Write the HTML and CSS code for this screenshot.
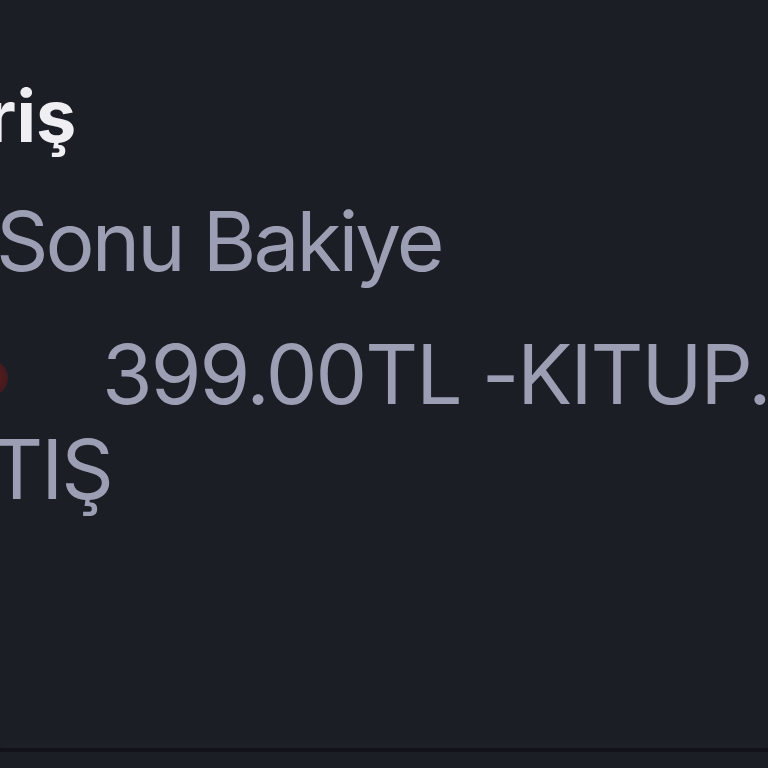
FILE: index.html
```html
<!DOCTYPE html>
<html lang="tr">
  <head>
    <meta charset="UTF-8" />
    <meta name="viewport" content="width=device-width, initial-scale=1.0" />
    <title>Giriş</title>
    <link rel="stylesheet" href="styles.css">
  </head>
  <body>
    <div class="page">
      <div class="content">
        <h1 class="title">Giriş</h1>
        <p class="label">Sonu Bakiye</p>
        <p class="entry">
          <span class="dot"></span><span class="amount">399.00TL -KITUP.NET SATIŞ</span>
        </p>
      </div>
      <div class="bottom-bar"></div>
    </div>
  </body>
</html>
```
FILE: styles.css
```css
body {
  margin: 0;
  background: #1c1e26;
  font-family: Inter, "Liberation Sans", sans-serif;
  overflow: hidden;
}
.page {
  height: 100vh;
  display: flex;
  flex-direction: column;
}
.content {
  flex: 1;
  padding-top: 72px;
}
.title {
  margin: 0 0 34px -87px;
  font-size: 72px;
  line-height: 88px;
  font-weight: 700;
  color: #eeeef3;
}
.label {
  margin: 0 0 38px -4px;
  font-size: 82px;
  line-height: 95px;
  letter-spacing: -3px;
  color: #9c9eb4;
  white-space: nowrap;
}
.entry {
  margin: 0 0 0 -108px;
  width: 1060px;
  font-size: 82px;
  line-height: 95px;
  letter-spacing: -2px;
  color: #9c9eb4;
}
.dot {
  display: inline-block;
  width: 36px;
  height: 36px;
  margin: 0 94px 0 80px;
  border-radius: 50%;
  background: radial-gradient(circle, #5e1a1c 25%, #2e1b21 100%);
  vertical-align: 8px;
}
.bottom-bar {
  height: 16px;
  border-top: 4px solid #12131a;
  box-shadow: 0 -8px 10px rgba(255, 255, 255, 0.015);
}
```
